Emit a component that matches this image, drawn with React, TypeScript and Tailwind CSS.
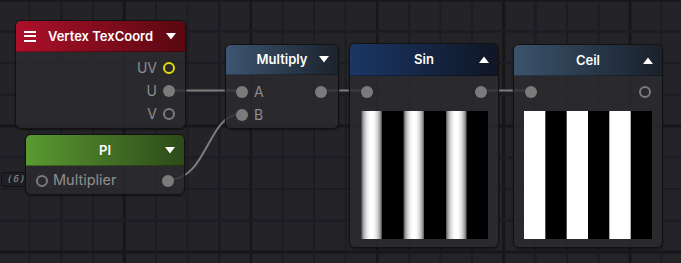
import React from "react";

const FONT = { fontFamily: "Inter, 'Noto Sans', sans-serif" };

function Grid() {
  const vx: { x: number; major: boolean }[] = [];
  for (let k = 0; k < 24; k++) vx.push({ x: -2 + 31.6 * k, major: k % 4 === 0 });
  const hy: { y: number; major: boolean }[] = [];
  for (let k = 0; k < 10; k++) hy.push({ y: 0 + 31.5 * k, major: k % 4 === 0 });
  return (
    <svg className="absolute inset-0" width={681} height={263}>
      <defs>
        <filter id="blur">
          <feGaussianBlur stdDeviation="0.6" />
        </filter>
      </defs>
      <g filter="url(#blur)">
        {vx.map((l, i) => (
          <line key={"v" + i} x1={l.x} x2={l.x} y1={0} y2={263} stroke={l.major ? "#19191b" : "#1d1d20"} strokeWidth={l.major ? 3 : 2} />
        ))}
        {hy.map((l, i) => (
          <line key={"h" + i} x1={0} x2={681} y1={l.y} y2={l.y} stroke={l.major ? "#19191b" : "#1d1d20"} strokeWidth={l.major ? 3 : 2} />
        ))}
      </g>
    </svg>
  );
}

function Wires() {
  return (
    <svg className="absolute inset-0" width={681} height={263}>
      <g stroke="#7d7d7d" strokeWidth={2} fill="none">
        <path d="M169 90.5 L241 90.5" />
        <path d="M168 180 C 208 180, 207 114, 241 114" />
        <path d="M321 90.5 L366 90.5" />
        <path d="M482 90.5 L530 90.5" />
      </g>
    </svg>
  );
}

function Port({ kind }: { kind: "fill" | "ring" | "yellow" }) {
  if (kind === "fill") return <div className="w-[12px] h-[12px] rounded-full bg-[#7b7b7b] shrink-0" />;
  if (kind === "yellow") return <div className="w-[12px] h-[12px] rounded-full border-2 border-[#e3dd00] shrink-0" />;
  return <div className="w-[12px] h-[12px] rounded-full border-2 border-[#7b7b7b] shrink-0" />;
}

function Tri({ up }: { up?: boolean }) {
  return (
    <svg width="10" height="7" viewBox="0 0 10 7">
      {up ? <path d="M0 7 L5 0.5 L10 7 Z" fill="#fff" /> : <path d="M0 0 L10 0 L5 6.5 Z" fill="#fff" />}
    </svg>
  );
}

function Header({ title, grad, up, menu, h = "h-[31px]" }: { title: string; grad: string; up?: boolean; menu?: boolean; h?: string }) {
  return (
    <div className={`${h} ${grad} rounded-t-[5px] grid grid-cols-[1fr_auto_1fr] items-center px-[8px] border-b border-black/30`}>
      <div className="flex items-center">
        {menu && (
          <div className="flex flex-col gap-[2.5px]">
            <div className="w-[12px] h-[2px] bg-white" />
            <div className="w-[12px] h-[2px] bg-white" />
            <div className="w-[12px] h-[2px] bg-white" />
          </div>
        )}
      </div>
      <div className="text-white text-[13px] font-semibold leading-none">{title}</div>
      <div className="flex justify-end pr-[1px]">
        <Tri up={up} />
      </div>
    </div>
  );
}

function srgb(v: number) {
  return v <= 0.0031308 ? 12.92 * v : 1.055 * Math.pow(v, 1 / 2.4) - 0.055;
}

function SinPreview() {
  const W = 127;
  const cols = [] as React.ReactNode[];
  for (let i = 0; i < W; i++) {
    const x = (i + 0.5) / W;
    const v = Math.sin(6 * Math.PI * x);
    const c = v <= 0 ? 0 : Math.round(srgb(v) * 255);
    cols.push(<rect key={i} x={i} y={0} width={1.05} height={128} fill={`rgb(${c},${c},${c})`} />);
  }
  return (
    <svg width={W} height={128} className="block">
      <rect width={W} height={128} fill="#000" />
      {cols}
    </svg>
  );
}

function CeilPreview() {
  const W = 128;
  const p = W / 3;
  return (
    <svg width={W} height={128} className="block">
      <rect width={W} height={128} fill="#000" />
      {[0, 1, 2].map((k) => (
        <rect key={k} x={k * p} y={0} width={p / 2} height={128} fill="#fff" />
      ))}
    </svg>
  );
}

const body = "bg-[#2c2c30]/80 border border-[#121214] rounded-[6px] shadow-[0_1px_2px_rgba(0,0,0,0.5)]";
const label = "text-[14px] text-[#8e8e8e] leading-none";

export default function App() {
  return (
    <div className="relative w-[681px] h-[263px] overflow-hidden bg-[#242428]" style={FONT}>
      <Grid />
      <Wires />

      {/* (6) badge */}
      <div className="absolute left-[1px] top-[172px] w-[30px] h-[15px] rounded-[3px] bg-[#1f1f22] border border-[#111113] flex items-center pl-[5px]">
        <span className="text-[9px] italic text-[#9a9a9a] tracking-[1px] leading-none" style={{ fontFamily: "'DejaVu Sans Mono', monospace" }}>(6)</span>
      </div>

      {/* Vertex TexCoord */}
      <div className={`absolute left-[15px] top-[20px] w-[171px] h-[109px] ${body} flex flex-col`}>
        <Header title="Vertex TexCoord" grad="bg-gradient-to-r from-[#ad1029] to-[#5a0811]" menu />
        <div className="flex flex-col pt-[4px] pr-[10px]">
          {["UV", "U", "V"].map((t, i) => (
            <div key={t} className="h-[23px] flex items-center justify-end gap-[6px]">
              <span className={label}>{t}</span>
              <Port kind={i === 0 ? "yellow" : i === 1 ? "fill" : "ring"} />
            </div>
          ))}
        </div>
      </div>

      {/* PI */}
      <div className={`absolute left-[25px] top-[134px] w-[160px] h-[61px] ${body} flex flex-col`}>
        <Header title="PI" grad="bg-gradient-to-r from-[#5b9a31] to-[#2d4b19]" />
        <div className="h-[23px] mt-[3px] flex items-center justify-between pl-[10px] pr-[10px]">
          <div className="flex items-center gap-[5px]">
            <Port kind="ring" />
            <span className="text-[14.5px] text-[#8e8e8e] leading-none">Multiplier</span>
          </div>
          <Port kind="fill" />
        </div>
      </div>

      {/* Multiply */}
      <div className={`absolute left-[225px] top-[44px] w-[114px] h-[85px] ${body} flex flex-col`}>
        <Header title="Multiply" grad="bg-gradient-to-r from-[#3d5672] to-[#1b232d]" h="h-[30px]" />
        <div className="flex flex-col pt-[5px] pl-[10px] pr-[11px]">
          <div className="h-[23px] flex items-center justify-between">
            <div className="flex items-center gap-[6px]">
              <Port kind="fill" />
              <span className={label}>A</span>
            </div>
            <Port kind="fill" />
          </div>
          <div className="h-[23px] flex items-center">
            <div className="flex items-center gap-[6px]">
              <Port kind="fill" />
              <span className={label}>B</span>
            </div>
          </div>
        </div>
      </div>

      {/* Sin */}
      <div className={`absolute left-[349px] top-[43px] w-[150px] h-[205px] ${body} flex flex-col`}>
        <Header title="Sin" grad="bg-gradient-to-r from-[#1b3766] to-[#0f1625]" up h="h-[32px]" />
        <div className="h-[23px] mt-[4px] flex items-center justify-between pl-[11px] pr-[11px]">
          <Port kind="fill" />
          <Port kind="fill" />
        </div>
        <div className="mt-[8px] pl-[11px]">
          <SinPreview />
        </div>
      </div>

      {/* Ceil */}
      <div className={`absolute left-[513px] top-[44px] w-[150px] h-[204px] ${body} flex flex-col`}>
        <Header title="Ceil" grad="bg-gradient-to-r from-[#3a536d] to-[#19212b]" up />
        <div className="h-[23px] mt-[4px] flex items-center justify-between pl-[11px] pr-[11px]">
          <Port kind="fill" />
          <Port kind="ring" />
        </div>
        <div className="mt-[8px] pl-[10px]">
          <CeilPreview />
        </div>
      </div>
    </div>
  );
}
